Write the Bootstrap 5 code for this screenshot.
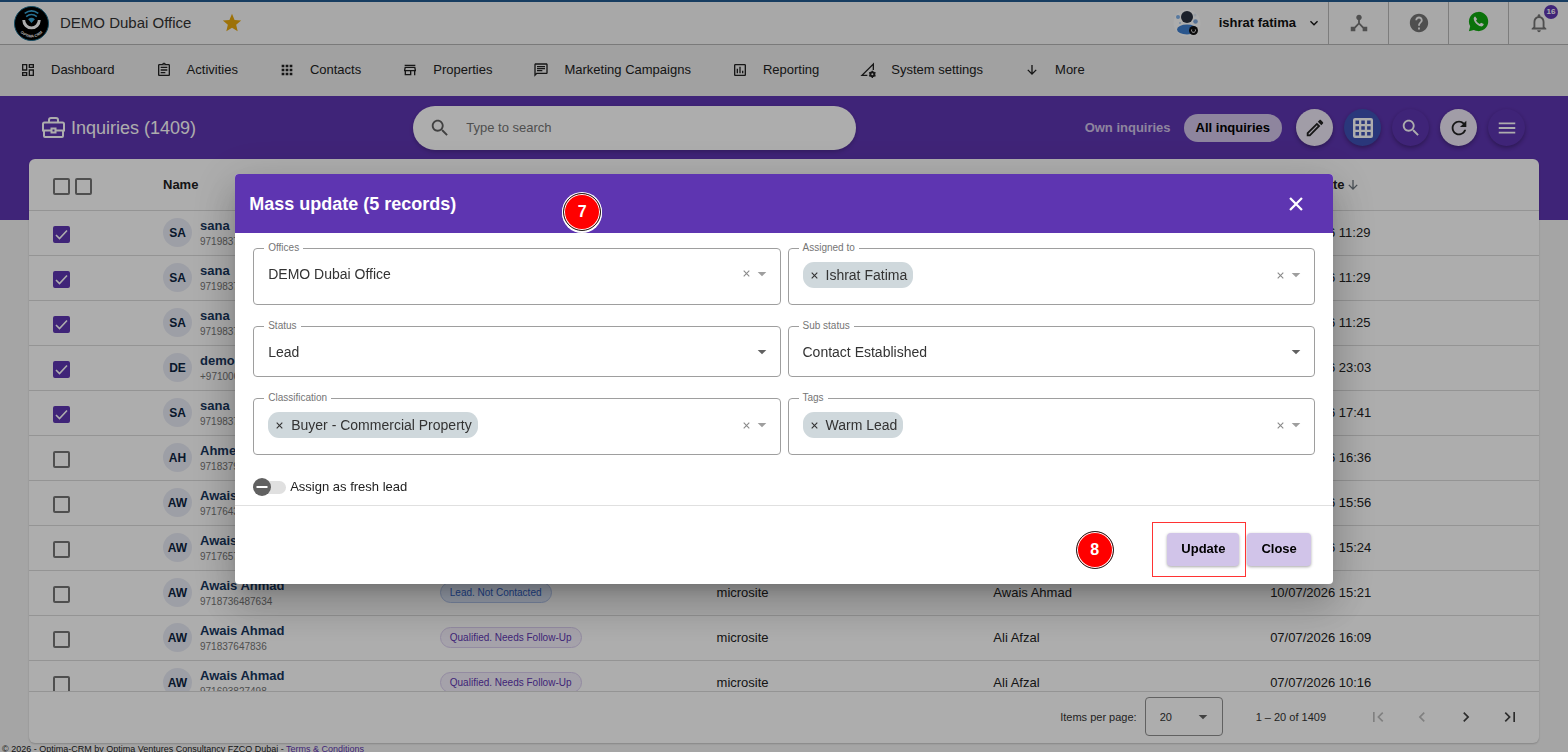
<!DOCTYPE html>
<html lang="en">
<head>
<meta charset="utf-8">
<meta name="viewport" content="width=device-width, initial-scale=1">
<title>Inquiries - Mass update</title>
<link href="https://cdn.jsdelivr.net/npm/bootstrap@5.3.0/dist/css/bootstrap.min.css" rel="stylesheet">
<style>
  :root { --purple: #5e35b1; --line: #dadada; --ink: #212121; }
  body { font-family: "Liberation Sans", Arial, sans-serif; font-size: 13px; line-height: 16px; color: var(--ink); background: #f4f4f4; height: 100vh; overflow: hidden; }
  .ico { width: 16px; height: 16px; fill: currentColor; flex: none; display: block; }
  .ico-20 { width: 20px; height: 20px; }
  .ico-22 { width: 22px; height: 22px; }
  .ico-24 { width: 24px; height: 24px; }

  /* top bar */
  .topbar { height: 45px; border-top: 2px solid #235a90; border-bottom: 1px solid #b4b4b4; background: #f8f8f8; padding-left: 14px; }
  .office-name { font-size: 15px; margin-left: 11px; margin-right: 30px; color: #333; }
  .top-cell { width: 60px; border: 0; border-left: 1px solid #b8b8b8; background: none; color: #757575; padding: 0; }
  .notify { top: 3px; right: 10px; width: 14px; height: 14px; border-radius: 50%; background: var(--purple); color: #fff; font-size: 8px; line-height: 14px; font-weight: 700; }
  .account { margin-right: 6px; color: #111; border: 0; background: none; padding: 0; }
  .account-name { margin: 0 10px 0 18px; }

  /* main menu */
  .mainmenu { height: 51px; background: #ededed; gap: 41px; padding: 0 0 2px 20px; }
  .mainmenu a { gap: 15px; color: var(--ink); }

  /* page header and list */
  .workspace { background: linear-gradient(var(--purple) 124px, transparent 124px); }
  .toolbar { height: 63px; padding-right: 43px; }
  .title-area { width: 27.1%; padding-left: 41px; gap: 5px; color: #fff; }
  .title-area h1 { font-size: 18px; line-height: 24px; margin: 0; font-weight: 400; }
  .searchbox { width: 29%; height: 44px; border-radius: 22px; background: #fff; padding: 0 16px; gap: 15px; color: #616161; box-shadow: 0 2px 4px rgba(0,0,0,.2); }
  .searchbox input { border: 0; background: none; outline: 0; font-size: 13px; padding: 0; min-width: 0; }
  .searchbox input::placeholder { color: #757575; }
  .scopes { gap: 13px; margin-right: 14px; }
  .scope { border: 0; background: none; font-weight: 700; padding: 0; color: #d1c4e9; }
  .scope-on { background: #d1c4e9; color: #000; height: 28px; border-radius: 14px; padding: 0 12px; }
  .rounds { gap: 11px; }
  .round { width: 37px; height: 37px; border-radius: 50%; border: 0; padding: 0; box-shadow: 0 2px 4px rgba(0,0,0,.3); color: #fff; background: var(--purple); }
  .round-light { background: #ede7f6; color: #222; }
  .round-blue { background: #3f51b5; }

  .listcard { margin: 0 29px; background: #fff; border-radius: 6px; box-shadow: 0 1px 2px rgba(0,0,0,.2); }
  .listbody { height: calc(100vh - 220px); overflow: hidden; }
  .inquiries { table-layout: fixed; width: 100%; }
  .inquiries th, .inquiries td { border-bottom: 1px solid var(--line); padding: 0; vertical-align: middle; white-space: nowrap; }
  .inquiries thead tr { height: 51px; }
  .inquiries tbody tr { height: 45px; }
  .inquiries th { padding-top: 2px; }
  .inquiries th:first-child, .inquiries td:first-child { padding-left: 24px; }
  .c-pick { width: 134px; }
  .c-data { width: 18.33%; }
  .pick { width: 17px; height: 17px; margin: 2px 5px 0 0; border: 2px solid #757575; border-radius: 2px !important; float: none; display: inline-block; vertical-align: middle; }
  .inquiries td .pick { margin-top: 4px; }
  .pick:checked { background-color: var(--purple); border-color: var(--purple); background-size: 17px 17px; background-image: url("data:image/svg+xml,%3Csvg xmlns='http://www.w3.org/2000/svg' viewBox='0 0 17 17'%3E%3Cpath d='M3 9l3.500 3.500L14 4.500' fill='none' stroke='%23fff' stroke-width='1.600'/%3E%3C/svg%3E"); }
  .initials { width: 29px; height: 29px; border-radius: 50%; background: #e8ebf5; color: #0d2440; font-weight: 700; font-size: 12px; flex: none; }
  .who { gap: 8px; }
  .who div { padding-top: 2px; }
  .who a { color: #17365d; font-weight: 700; display: block; line-height: 16px; }
  .who small { color: #757575; font-size: 10px; line-height: 16px; display: block; }
  .stage { height: 21px; border-radius: 11px; border: 1px solid #d9cdee; background: #f4effb; color: #5e35b1; font-size: 10px; padding: 0 9px; }
  .stage-lead { border-color: #b3c5ec; background: #dfe9fb; color: #2f62c9; }

  .pager { height: 52px; font-size: 11px; border-top: 1px solid var(--line); padding: 0 7px 2px 0; color: #333; }
  .pager-size { position: relative; margin: 0 33px 0 8px; }
  .pager-size select { width: 78px; height: 39px; border: 1px solid #8f8f8f; border-radius: 4px; padding-left: 14px; font-size: 11px; appearance: none; background: none; color: #333; }
  .pager-size .ico { position: absolute; right: 12px; top: 12px; color: #616161; }
  .pager-nav { margin-left: 30px; }
  .pager-nav button { width: 44px; height: 44px; border: 0; background: none; padding: 0; color: #424242; }
  .pager-nav button:disabled { color: #bdbdbd; }
  .legal { font-size: 9px; line-height: 12px; padding: 0 2px; color: #222; }
  .legal a { color: var(--purple); }

  /* mass update dialog */
  .modal-backdrop.show { opacity: .32; }
  .mass-dialog { max-width: 70vw; margin: 174px auto 0; }
  .mass-dialog .modal-content { border: 0; border-radius: 4px; color: var(--ink); box-shadow: 0 11px 15px -7px rgba(0,0,0,.2), 0 24px 38px 3px rgba(0,0,0,.14), 0 9px 46px 8px rgba(0,0,0,.12); }
  .mass-dialog .modal-header { height: 59px; background: var(--purple); color: #fff; border: 0; border-radius: 4px 4px 0 0; padding: 0 26px 0 14px; }
  .mass-dialog .modal-title { font-size: 18px; line-height: 24px; font-weight: 700; }
  .mass-dialog .modal-body { padding: 15px 18px 8px; }
  .fields { display: grid; grid-template-columns: 1fr 1fr; gap: 21px 7px; }
  .outlined { position: relative; border: 1px solid #9e9e9e; border-radius: 4px; padding: 0 10px 0 14px; font-size: 14px; height: 57px; }
  .outlined-short { height: 51px; }
  .outlined > label { position: absolute; left: 10px; top: -7px; padding: 0 4px; background: #fff; color: #757575; font-size: 10px; line-height: 12px; }
  .field-row { height: 49px; }
  .field-row-tall { height: 52px; }
  .outlined select, .outlined input { border: 0; outline: 0; background: none; appearance: none; padding: 0; color: #333; font-size: 14px; min-width: 0; }
  .outlined .drop { color: #9e9e9e; pointer-events: none; }
  .outlined .drop-dark { color: #616161; }
  .plain-x { border: 0; background: none; padding: 0; color: inherit; }
  .plain-x svg { width: 7px; height: 7px; display: block; stroke: currentColor; stroke-width: 1.1; fill: none; }
  .clear { color: #8a8a8a; }
  .token { height: 26px; border-radius: 11px; background: #cfd8dc; padding: 0 6px 0 8px; gap: 8px; color: #333; }
  .fresh { margin-top: 22px; height: 20px; gap: 4px; }
  .fresh input { width: 33px; height: 18px; margin: 0; appearance: none; background: url("data:image/svg+xml,%3Csvg xmlns='http://www.w3.org/2000/svg' viewBox='0 0 33 18'%3E%3Crect x='4' y='3' width='29' height='13' rx='6.500' fill='%23e0e0e0'/%3E%3Ccircle cx='9' cy='9' r='9' fill='%23616161'/%3E%3Crect x='3.500' y='8' width='11' height='2' fill='%23fff'/%3E%3C/svg%3E") no-repeat center; }
  .mass-dialog .modal-footer { height: 79px; padding: 8px 22px 0 0; gap: 8px; border-top: 1px solid #e0e0e0; }
  .act { height: 33px; padding: 0 14px; margin: 0; font-size: 13px; line-height: 16px; font-weight: 700; background: #d1c4e9; color: #000; border: 0; border-radius: 4px; box-shadow: 0 1px 3px rgba(0,0,0,.35); }
  .highlight { position: absolute; inset: -11px -7px -11px -15px; border: 1px solid #f33; pointer-events: none; }
  .step { position: absolute; width: 38px; height: 38px; border-radius: 50%; background: #f00; border: 1px solid #222; box-shadow: inset 0 0 0 1px #fff; color: #fff; font-size: 16px; font-weight: 700; }
  .step-7 { left: 328px; top: 19px; box-shadow: inset 0 0 0 1px #fff, 0 0 0 1px #fff, 0 1px 0 1px #fff; }
  .step-8 { right: 219px; bottom: 15px; }
</style>
</head>
<body class="modal-open">
<svg class="d-none" aria-hidden="true">
  <symbol id="i-dash" viewBox="0 0 24 24"><path d="M19 5v2h-4V5h4M9 5v6H5V5h4m10 8v6h-4v-6h4M9 17v2H5v-2h4M21 3h-8v6h8V3zM11 3H3v10h8V3zm10 8h-8v10h8V11zm-10 4H3v6h8v-6z"/></symbol>
  <symbol id="i-task" viewBox="0 0 24 24"><path d="M7 15h7v2H7zm0-4h10v2H7zm0-4h10v2H7z"/><path d="M19 3h-4.180C14.400 1.840 13.300 1 12 1s-2.400.840-2.820 2H5c-1.100 0-2 .9-2 2v14c0 1.100.9 2 2 2h14c1.100 0 2-.9 2-2V5c0-1.100-.9-2-2-2zm-7-.25c.41 0 .75.34.75.75s-.34.75-.75.75-.75-.34-.75-.75.34-.75.75-.75zM19 19H5V5h14v14z"/></symbol>
  <symbol id="i-apps" viewBox="0 0 24 24"><path d="M4 8h4V4H4v4zm6 12h4v-4h-4v4zm-6 0h4v-4H4v4zm0-6h4v-4H4v4zm6 0h4v-4h-4v4zm6-10v4h4V4h-4zm-6 4h4V4h-4v4zm6 6h4v-4h-4v4zm0 6h4v-4h-4v4z"/></symbol>
  <symbol id="i-store" viewBox="0 0 24 24"><path d="M18.360 9l.6 3H5.040l.6-3h12.720M20 4H4v2h16V4zm0 3H4l-1 5v2h1v6h10v-6h4v6h2v-6h1v-2l-1-5zM6 18v-4h6v4H6z"/></symbol>
  <symbol id="i-chat" viewBox="0 0 24 24"><path d="M4 4h16v12H5.170L4 17.170V4m0-2c-1.100 0-1.990.9-1.990 2L2 22l4-4h14c1.100 0 2-.9 2-2V4c0-1.100-.9-2-2-2H4zm2 10h8v2H6v-2zm0-3h12v2H6V9zm0-3h12v2H6V6z"/></symbol>
  <symbol id="i-report" viewBox="0 0 24 24"><path d="M9 17H7v-7h2v7zm4 0h-2V7h2v10zm4 0h-2v-4h2v4zm2 2H5V5h14v14zm0-16H5c-1.100 0-2 .9-2 2v14c0 1.100.9 2 2 2h14c1.100 0 2-.9 2-2V5c0-1.100-.9-2-2-2z"/></symbol>
  <symbol id="i-setup" viewBox="0 0 24 24"><path d="M11 20H3L20 3v9" fill="none" stroke="currentColor" stroke-width="2"/><circle cx="18.500" cy="18.500" r="3" fill="none" stroke="currentColor" stroke-width="3"/><path d="M18.500 13v2m0 7v2M13.700 15.700l1.800 1m6 3.600l1.800 1m-9.600 0l1.800-1m6-3.600l1.800-1" stroke="currentColor" stroke-width="2"/></symbol>
  <symbol id="i-down" viewBox="0 0 24 24"><path d="M19 12.500l-1.410-1.410L13 15.670V4.500h-2v11.170l-4.580-4.590L5 12.500l7 7 7-7z"/></symbol>
  <symbol id="i-search" viewBox="0 0 24 24"><path d="M15.500 14h-.79l-.28-.27C15.410 12.590 16 11.110 16 9.500 16 5.910 13.090 3 9.500 3S3 5.910 3 9.500 5.910 16 9.500 16c1.610 0 3.090-.59 4.230-1.570l.27.28v.79l5 4.990L20.490 19l-4.990-5zm-6 0C7.010 14 5 11.990 5 9.500S7.010 5 9.500 5 14 7.010 14 9.500 11.990 14 9.500 14z"/></symbol>
  <symbol id="i-edit" viewBox="0 0 24 24"><path d="M14.060 9.020l.92.92L5.920 19H5v-.92l9.060-9.060M17.660 3c-.25 0-.51.1-.7.29l-1.830 1.830 3.750 3.750 1.830-1.830c.39-.39.39-1.020 0-1.410l-2.340-2.340c-.2-.2-.45-.29-.71-.29zm-3.600 3.190L3 17.250V21h3.750L17.810 9.940l-3.750-3.750z"/></symbol>
  <symbol id="i-grid" viewBox="0 0 24 24"><path fill-rule="evenodd" d="M4 2h16a2 2 0 0 1 2 2v16a2 2 0 0 1-2 2H4a2 2 0 0 1-2-2V4a2 2 0 0 1 2-2zM4.500 4.500v3.500h3.500V4.500zm5.800 0v3.500h3.500V4.500zm5.800 0v3.500h3.500V4.500zM4.500 10.300v3.500h3.500v-3.500zm5.800 0v3.500h3.500v-3.500zm5.800 0v3.500h3.500v-3.500zM4.500 16.100v3.500h3.500v-3.500zm5.800 0v3.500h3.500v-3.500zm5.800 0v3.500h3.500v-3.500z"/></symbol>
  <symbol id="i-refresh" viewBox="0 0 24 24"><path d="M17.650 6.350C16.200 4.900 14.210 4 12 4c-4.420 0-7.990 3.580-7.990 8s3.570 8 7.990 8c3.730 0 6.840-2.550 7.730-6h-2.080c-.82 2.330-3.040 4-5.650 4-3.310 0-6-2.690-6-6s2.690-6 6-6c1.660 0 3.140.69 4.220 1.780L13 11h7V4l-2.350 2.350z"/></symbol>
  <symbol id="i-menu" viewBox="0 0 24 24"><path d="M3 18h18v-2H3v2zm0-5h18v-2H3v2zm0-7v2h18V6H3z"/></symbol>
  <symbol id="i-help" viewBox="0 0 24 24"><path d="M12 2C6.480 2 2 6.480 2 12s4.480 10 10 10 10-4.480 10-10S17.520 2 12 2zm1 17h-2v-2h2v2zm2.070-7.750l-.9.92C13.450 12.900 13 13.500 13 15h-2v-.5c0-1.100.45-2.100 1.170-2.830l1.240-1.260c.37-.36.59-.86.59-1.410 0-1.100-.9-2-2-2s-2 .9-2 2H8c0-2.210 1.790-4 4-4s4 1.790 4 4c0 .88-.36 1.680-.93 2.250z"/></symbol>
  <symbol id="i-bell" viewBox="0 0 24 24"><path d="M12 22c1.100 0 2-.9 2-2h-4c0 1.100.9 2 2 2zm6-6v-5c0-3.070-1.630-5.640-4.500-6.320V4c0-.83-.67-1.500-1.500-1.500s-1.500.67-1.500 1.500v.68C7.640 5.360 6 7.920 6 11v5l-2 2v1h16v-1l-2-2zm-2 1H8v-6c0-2.480 1.510-4.500 4-4.500s4 2.020 4 4.500v6z"/></symbol>
  <symbol id="i-hub" viewBox="0 0 24 24"><path d="M17 16l-4-4V8.820C14.160 8.400 15 7.300 15 6c0-1.660-1.340-3-3-3S9 4.340 9 6c0 1.300.84 2.400 2 2.820V12l-4 4H3v5h5v-3.050l4-4.200 4 4.200V21h5v-5h-4z"/></symbol>
  <symbol id="i-more" viewBox="0 0 24 24"><path d="M16.590 8.590L12 13.170 7.410 8.590 6 10l6 6 6-6z"/></symbol>
  <symbol id="i-star" viewBox="0 0 24 24"><path d="M12 17.270L18.180 21l-1.640-7.030L22 9.240l-7.190-.61L12 2 9.190 8.630 2 9.240l5.460 4.730L5.820 21z"/></symbol>
  <symbol id="i-drop" viewBox="0 0 24 24"><path d="M5.500 9h13L12 15.500z"/></symbol>
  <symbol id="i-x" viewBox="0 0 7 7"><path d="M.7.7l5.600 5.600m0-5.600L.7 6.300"/></symbol>
  <symbol id="i-first" viewBox="0 0 24 24"><path d="M18.410 16.590L13.820 12l4.590-4.590L17 6l-6 6 6 6zM6 6h2v12H6z"/></symbol>
  <symbol id="i-prev" viewBox="0 0 24 24"><path d="M15.410 7.410L14 6l-6 6 6 6 1.410-1.410L10.830 12z"/></symbol>
  <symbol id="i-next" viewBox="0 0 24 24"><path d="M10 6L8.590 7.410 13.170 12l-4.580 4.590L10 18l6-6z"/></symbol>
  <symbol id="i-last" viewBox="0 0 24 24"><path d="M5.590 7.410L10.180 12l-4.590 4.590L7 18l6-6-6-6zM16 6h2v12h-2z"/></symbol>
</svg>

<header class="topbar d-flex align-items-center">
  <svg width="35" height="35" viewBox="0 0 36 36" class="flex-shrink-0" role="img" aria-label="Optima CRM logo">
    <circle cx="18" cy="18" r="17.500" fill="#000" stroke="#1b6f93"/>
    <path d="M10 14.500a8 8 0 1 0 16 0" fill="none" stroke="#fff" stroke-width="3"/>
    <path d="M11 7.500q7-5 14 0M12.500 11q5.500-4.500 11 0" fill="none" stroke="#3aa7d8" stroke-width="1.600"/>
    <path d="M14.500 13.500q3.500-3 7 0L18 17.500z" fill="#3aa7d8"/>
    <path id="arc" d="M4.500 24a15 15 0 0 0 27 0" fill="none"/>
    <text font-size="4" font-weight="700" fill="#fff" text-anchor="middle"><textPath href="#arc" startOffset="50%">OPTIMA CRM</textPath></text>
  </svg>
  <span class="office-name">DEMO Dubai Office</span>
  <svg class="ico ico-22" style="color:#e8a80c"><use href="#i-star"/></svg>
  <div class="ms-auto d-flex align-self-stretch">
    <button class="account d-flex align-items-center" type="button">
      <svg width="28" height="28" viewBox="0 0 28 28">
        <circle cx="14" cy="14" r="13.500" fill="#fff"/>
        <circle cx="14" cy="8" r="6" fill="#28303f"/><ellipse cx="14" cy="20.500" rx="10" ry="5" fill="#3f7fd0"/>
        <circle cx="5" cy="8" r="2" fill="#7fb2ea"/><circle cx="22.500" cy="12.500" r="2.300" fill="#7fa9dd"/><circle cx="22" cy="6" r="1.500" fill="#e3edf8"/><circle cx="7" cy="14" r="1" fill="#b9d3f0"/>
        <circle cx="20.500" cy="21.500" r="4.500" fill="#111"/><path d="M18.700 20.500a2 2 0 1 0 3.600 0" fill="none" stroke="#fff"/>
      </svg>
      <b class="account-name">ishrat fatima</b>
      <svg class="ico"><use href="#i-more"/></svg>
    </button>
    <button class="top-cell d-flex align-items-center justify-content-center" type="button" aria-label="Structure"><svg class="ico ico-22"><use href="#i-hub"/></svg></button>
    <button class="top-cell d-flex align-items-center justify-content-center" type="button" aria-label="Help"><svg class="ico ico-22"><use href="#i-help"/></svg></button>
    <button class="top-cell d-flex align-items-center justify-content-center" type="button" aria-label="WhatsApp">
      <svg width="21" height="21" viewBox="0 0 24 24" class="mb-1"><path d="M12 1a11 11 0 1 1-5.300 20.600L1 23l1.500-5.500A11 11 0 0 1 12 1z" fill="#0fa80f"/><path d="M8.200 6.200c-.9.300-2 1.300-1.600 3.300.8 3.800 4.200 7.200 7.700 8 2 .4 3.500-.7 3.700-2.600l-3.100-1.600-1.400 1.600c-2-.8-3.500-2.300-4.300-4.200l1.300-1.400z" fill="#fff"/></svg>
    </button>
    <button class="top-cell position-relative d-flex align-items-center justify-content-center" type="button" aria-label="Notifications"><svg class="ico ico-22"><use href="#i-bell"/></svg><span class="notify position-absolute">16</span></button>
  </div>
</header>

<nav class="mainmenu d-flex align-items-center" aria-label="Main">
  <a href="#" class="d-flex align-items-center text-decoration-none"><svg class="ico"><use href="#i-dash"/></svg>Dashboard</a>
  <a href="#" class="d-flex align-items-center text-decoration-none"><svg class="ico"><use href="#i-task"/></svg>Activities</a>
  <a href="#" class="d-flex align-items-center text-decoration-none"><svg class="ico"><use href="#i-apps"/></svg>Contacts</a>
  <a href="#" class="d-flex align-items-center text-decoration-none"><svg class="ico"><use href="#i-store"/></svg>Properties</a>
  <a href="#" class="d-flex align-items-center text-decoration-none"><svg class="ico"><use href="#i-chat"/></svg>Marketing Campaigns</a>
  <a href="#" class="d-flex align-items-center text-decoration-none"><svg class="ico"><use href="#i-report"/></svg>Reporting</a>
  <a href="#" class="d-flex align-items-center text-decoration-none"><svg class="ico"><use href="#i-setup"/></svg>System settings</a>
  <a href="#" class="d-flex align-items-center text-decoration-none"><svg class="ico"><use href="#i-down"/></svg>More</a>
</nav>

<main class="workspace">
  <div class="toolbar d-flex align-items-center">
    <div class="title-area d-flex align-items-center">
      <svg width="25" height="24" viewBox="0 0 25 24" fill="none" stroke="#fff" stroke-width="2"><path d="M8 6.500V4a2 2 0 0 1 2-2h5a2 2 0 0 1 2 2v2.500M10 14.500H2V8q0-1.500 1.500-1.500h18q1.500 0 1.500 1.500v6.500h-8M3 14.500V20q0 1 1 1h17q1 0 1-1v-5.500"/><path d="M10.500 12.500h4v4h-4z"/></svg>
      <h1>Inquiries (1409)</h1>
    </div>
    <div class="searchbox d-flex align-items-center">
      <svg class="ico ico-22"><use href="#i-search"/></svg>
      <input type="text" class="flex-grow-1" placeholder="Type to search" aria-label="Search inquiries">
    </div>
    <div class="ms-auto d-flex align-items-center">
      <div class="scopes d-flex align-items-center">
        <button class="scope" type="button">Own inquiries</button>
        <button class="scope scope-on" type="button">All inquiries</button>
      </div>
      <div class="rounds d-flex">
        <button class="round round-light d-flex align-items-center justify-content-center" type="button" aria-label="Edit"><svg class="ico ico-22"><use href="#i-edit"/></svg></button>
        <button class="round round-blue d-flex align-items-center justify-content-center" type="button" aria-label="Grid"><svg class="ico ico-24"><use href="#i-grid"/></svg></button>
        <button class="round d-flex align-items-center justify-content-center" type="button" aria-label="Search"><svg class="ico ico-22"><use href="#i-search"/></svg></button>
        <button class="round round-light d-flex align-items-center justify-content-center" type="button" aria-label="Refresh"><svg class="ico ico-22"><use href="#i-refresh"/></svg></button>
        <button class="round d-flex align-items-center justify-content-center" type="button" aria-label="Menu"><svg class="ico ico-22"><use href="#i-menu"/></svg></button>
      </div>
    </div>
  </div>

  <section class="listcard">
    <div class="listbody">
      <table class="inquiries">
        <colgroup><col class="c-pick"><col class="c-data"><col class="c-data"><col class="c-data"><col class="c-data"><col></colgroup>
        <thead>
          <tr>
            <th><input type="checkbox" class="form-check-input pick" aria-label="Select page"><input type="checkbox" class="form-check-input pick" aria-label="Select all"></th>
            <th>Name</th><th></th><th></th><th></th>
            <th><span class="d-flex align-items-center">Update date<svg class="ico text-secondary"><use href="#i-down"/></svg></span></th>
          </tr>
        </thead>
        <tbody>
          <tr><td><input type="checkbox" class="form-check-input pick" aria-label="Select sana" checked></td><td><div class="who d-flex align-items-center"><span class="initials d-flex align-items-center justify-content-center">SA</span><div><a href="#" class="text-decoration-none">sana</a><small>9719837</small></div></div></td><td></td><td></td><td></td><td>13/07/2026 11:29</td></tr>
          <tr><td><input type="checkbox" class="form-check-input pick" aria-label="Select sana" checked></td><td><div class="who d-flex align-items-center"><span class="initials d-flex align-items-center justify-content-center">SA</span><div><a href="#" class="text-decoration-none">sana</a><small>9719837</small></div></div></td><td></td><td></td><td></td><td>13/07/2026 11:29</td></tr>
          <tr><td><input type="checkbox" class="form-check-input pick" aria-label="Select sana" checked></td><td><div class="who d-flex align-items-center"><span class="initials d-flex align-items-center justify-content-center">SA</span><div><a href="#" class="text-decoration-none">sana</a><small>9719837</small></div></div></td><td></td><td></td><td></td><td>13/07/2026 11:25</td></tr>
          <tr><td><input type="checkbox" class="form-check-input pick" aria-label="Select demo" checked></td><td><div class="who d-flex align-items-center"><span class="initials d-flex align-items-center justify-content-center">DE</span><div><a href="#" class="text-decoration-none">demo</a><small>+971000</small></div></div></td><td></td><td></td><td></td><td>12/07/2026 23:03</td></tr>
          <tr><td><input type="checkbox" class="form-check-input pick" aria-label="Select sana" checked></td><td><div class="who d-flex align-items-center"><span class="initials d-flex align-items-center justify-content-center">SA</span><div><a href="#" class="text-decoration-none">sana</a><small>9719837</small></div></div></td><td></td><td></td><td></td><td>12/07/2026 17:41</td></tr>
          <tr><td><input type="checkbox" class="form-check-input pick" aria-label="Select Ahmed"></td><td><div class="who d-flex align-items-center"><span class="initials d-flex align-items-center justify-content-center">AH</span><div><a href="#" class="text-decoration-none">Ahmed</a><small>9718379</small></div></div></td><td></td><td></td><td></td><td>10/07/2026 16:36</td></tr>
          <tr><td><input type="checkbox" class="form-check-input pick" aria-label="Select Awais Ahmad"></td><td><div class="who d-flex align-items-center"><span class="initials d-flex align-items-center justify-content-center">AW</span><div><a href="#" class="text-decoration-none">Awais Ahmad</a><small>9717643</small></div></div></td><td></td><td></td><td></td><td>10/07/2026 15:56</td></tr>
          <tr><td><input type="checkbox" class="form-check-input pick" aria-label="Select Awais Ahmad"></td><td><div class="who d-flex align-items-center"><span class="initials d-flex align-items-center justify-content-center">AW</span><div><a href="#" class="text-decoration-none">Awais Ahmad</a><small>9717657</small></div></div></td><td></td><td></td><td></td><td>10/07/2026 15:24</td></tr>
          <tr><td><input type="checkbox" class="form-check-input pick" aria-label="Select Awais Ahmad"></td><td><div class="who d-flex align-items-center"><span class="initials d-flex align-items-center justify-content-center">AW</span><div><a href="#" class="text-decoration-none">Awais Ahmad</a><small>9718736487634</small></div></div></td><td><span class="stage stage-lead d-inline-flex align-items-center">Lead. Not Contacted</span></td><td>microsite</td><td>Awais Ahmad</td><td>10/07/2026 15:21</td></tr>
          <tr><td><input type="checkbox" class="form-check-input pick" aria-label="Select Awais Ahmad"></td><td><div class="who d-flex align-items-center"><span class="initials d-flex align-items-center justify-content-center">AW</span><div><a href="#" class="text-decoration-none">Awais Ahmad</a><small>971837647836</small></div></div></td><td><span class="stage d-inline-flex align-items-center">Qualified. Needs Follow-Up</span></td><td>microsite</td><td>Ali Afzal</td><td>07/07/2026 16:09</td></tr>
          <tr><td><input type="checkbox" class="form-check-input pick" aria-label="Select Awais Ahmad"></td><td><div class="who d-flex align-items-center"><span class="initials d-flex align-items-center justify-content-center">AW</span><div><a href="#" class="text-decoration-none">Awais Ahmad</a><small>971693827498</small></div></div></td><td><span class="stage d-inline-flex align-items-center">Qualified. Needs Follow-Up</span></td><td>microsite</td><td>Ali Afzal</td><td>07/07/2026 10:16</td></tr>
        </tbody>
      </table>
    </div>
    <div class="pager d-flex align-items-center justify-content-end">
      <label for="psize">Items per page:</label>
      <div class="pager-size"><select id="psize"><option>20</option></select><svg class="ico"><use href="#i-drop"/></svg></div>
      <span>1 – 20 of 1409</span>
      <div class="pager-nav d-flex">
        <button type="button" class="d-flex align-items-center justify-content-center" disabled aria-label="First page"><svg class="ico ico-20"><use href="#i-first"/></svg></button>
        <button type="button" class="d-flex align-items-center justify-content-center" disabled aria-label="Previous page"><svg class="ico ico-20"><use href="#i-prev"/></svg></button>
        <button type="button" class="d-flex align-items-center justify-content-center" aria-label="Next page"><svg class="ico ico-20"><use href="#i-next"/></svg></button>
        <button type="button" class="d-flex align-items-center justify-content-center" aria-label="Last page"><svg class="ico ico-20"><use href="#i-last"/></svg></button>
      </div>
    </div>
  </section>
</main>
<footer class="legal">© 2026 - Optima-CRM by Optima Ventures Consultancy FZCO Dubai - <a href="#" class="text-decoration-none">Terms &amp; Conditions</a></footer>

<div class="modal-backdrop show"></div>
<div class="modal d-block" tabindex="-1" role="dialog" aria-labelledby="massTitle">
  <div class="modal-dialog mass-dialog">
    <form class="modal-content">
      <div class="modal-header">
        <h2 class="modal-title" id="massTitle">Mass update (5 records)</h2>
        <button class="plain-x" type="button" aria-label="Close dialog"><svg viewBox="0 0 24 24" style="width:22px;height:22px"><path d="M5.500 5.500l13 13m0-13l-13 13" stroke-width="2.500"/></svg></button>
      </div>
      <div class="modal-body">
        <div class="fields">
          <div class="outlined"><label for="f1">Offices</label>
            <div class="field-row d-flex align-items-center"><select id="f1" class="flex-grow-1"><option>DEMO Dubai Office</option></select><button type="button" class="plain-x clear" aria-label="Clear offices"><svg><use href="#i-x"/></svg></button><svg class="ico drop ms-1"><use href="#i-drop"/></svg></div></div>
          <div class="outlined"><label for="f2">Assigned to</label>
            <div class="field-row-tall d-flex align-items-center"><span class="token d-flex align-items-center"><button type="button" class="plain-x" aria-label="Remove Ishrat Fatima"><svg><use href="#i-x"/></svg></button>Ishrat Fatima</span><input id="f2" type="text" class="flex-grow-1"><button type="button" class="plain-x clear" aria-label="Clear assigned to"><svg><use href="#i-x"/></svg></button><svg class="ico drop ms-1"><use href="#i-drop"/></svg></div></div>
          <div class="outlined outlined-short"><label for="f3">Status</label>
            <div class="field-row d-flex align-items-center"><select id="f3" class="flex-grow-1"><option>Lead</option></select><svg class="ico drop drop-dark"><use href="#i-drop"/></svg></div></div>
          <div class="outlined outlined-short"><label for="f4">Sub status</label>
            <div class="field-row d-flex align-items-center"><select id="f4" class="flex-grow-1"><option>Contact Established</option></select><svg class="ico drop drop-dark"><use href="#i-drop"/></svg></div></div>
          <div class="outlined"><label for="f5">Classification</label>
            <div class="field-row-tall d-flex align-items-center"><span class="token d-flex align-items-center"><button type="button" class="plain-x" aria-label="Remove Buyer"><svg><use href="#i-x"/></svg></button>Buyer - Commercial Property</span><input id="f5" type="text" class="flex-grow-1"><button type="button" class="plain-x clear" aria-label="Clear classification"><svg><use href="#i-x"/></svg></button><svg class="ico drop ms-1"><use href="#i-drop"/></svg></div></div>
          <div class="outlined"><label for="f6">Tags</label>
            <div class="field-row-tall d-flex align-items-center"><span class="token d-flex align-items-center"><button type="button" class="plain-x" aria-label="Remove Warm Lead"><svg><use href="#i-x"/></svg></button>Warm Lead</span><input id="f6" type="text" class="flex-grow-1"><button type="button" class="plain-x clear" aria-label="Clear tags"><svg><use href="#i-x"/></svg></button><svg class="ico drop ms-1"><use href="#i-drop"/></svg></div></div>
        </div>
        <div class="fresh d-flex align-items-center"><input type="checkbox" id="fresh" role="switch"><label for="fresh">Assign as fresh lead</label></div>
      </div>
      <div class="modal-footer">
        <span class="position-relative d-flex m-0"><button type="submit" class="btn act">Update</button><span class="highlight"></span></span>
        <button type="button" class="btn act">Close</button>
      </div>
      <span class="step step-7 d-flex align-items-center justify-content-center">7</span>
      <span class="step step-8 d-flex align-items-center justify-content-center">8</span>
    </form>
  </div>
</div>
<script src="https://cdn.jsdelivr.net/npm/bootstrap@5.3.0/dist/js/bootstrap.bundle.min.js"></script>
</body>
</html>
